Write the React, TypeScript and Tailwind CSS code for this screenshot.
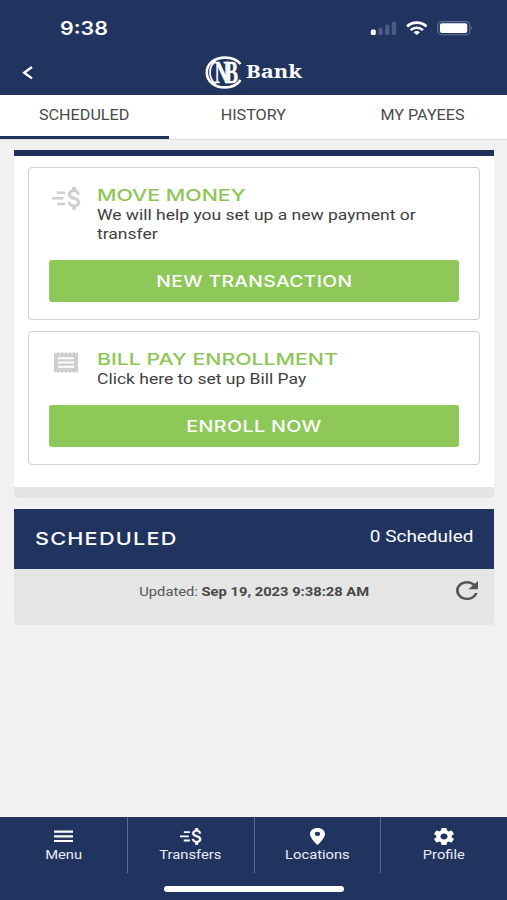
import React from 'react';

interface IconProps {
    className?: string;
}

const TransferIcon: React.FC<IconProps> = ({ className }) => (
    <svg viewBox="0 0 29 23" preserveAspectRatio="none" fill="currentColor" className={className}>
        <path d="M5 4.400h8v2.500H5zM0 10.100h11.500v2.500H0zM5 15.700h8v2.500H5z" />
        <path
            transform="translate(8.2 -3.75) scale(1.2 1.25)"
            stroke="currentColor"
            strokeWidth=".35"
            d="M11.8 10.9c-2.27-.59-3-1.2-3-2.15 0-1.09 1.01-1.85 2.7-1.85 1.78 0 2.44.85 2.5 2.1h2.21c-.07-1.72-1.12-3.3-3.21-3.81V3h-3v2.16c-1.94.42-3.5 1.68-3.5 3.61 0 2.31 1.91 3.46 4.7 4.13 2.5.6 3 1.48 3 2.41 0 .69-.49 1.79-2.7 1.79-2.06 0-2.87-.92-2.98-2.1h-2.2c.12 2.19 1.76 3.42 3.68 3.83V21h3v-2.15c1.95-.37 3.5-1.5 3.5-3.55 0-2.84-2.43-3.81-4.7-4.4z"
        />
    </svg>
);

const ReceiptIcon: React.FC<IconProps> = ({ className }) => (
    <svg viewBox="3 2 18 20" preserveAspectRatio="none" fill="currentColor" className={className}>
        <path d="M18 17H6v-2h12v2zm0-4H6v-2h12v2zm0-4H6V7h12v2zM3 22l1.5-1.5L6 22l1.5-1.5L9 22l1.5-1.5L12 22l1.5-1.5L15 22l1.5-1.5L18 22l1.5-1.5L21 22V2l-1.5 1.5L18 2l-1.5 1.5L15 2l-1.5 1.5L12 2l-1.5 1.5L9 2 7.5 3.5 6 2 4.5 3.5 3 2v20z" />
    </svg>
);

const RefreshIcon: React.FC<IconProps> = ({ className }) => (
    <svg viewBox="4 4 16 16" preserveAspectRatio="none" fill="currentColor" className={className}>
        <path d="M17.65 6.35C16.2 4.9 14.21 4 12 4c-4.42 0-7.99 3.58-7.99 8s3.57 8 7.99 8c3.73 0 6.84-2.55 7.73-6h-2.08c-.82 2.33-3.04 4-5.65 4-3.31 0-6-2.69-6-6s2.69-6 6-6c1.66 0 3.14.69 4.22 1.78L13 11h7V4l-2.35 2.35z" />
    </svg>
);

const MenuIcon: React.FC<IconProps> = ({ className }) => (
    <svg viewBox="0 0 19 17" preserveAspectRatio="none" fill="currentColor" className={className}>
        <path d="M0 2.500h19v2.200H0zM0 7.200h19v2.200H0zM0 11.900h19v2.200H0z" />
    </svg>
);

const PinIcon: React.FC<IconProps> = ({ className }) => (
    <svg viewBox="5 2 14 20" preserveAspectRatio="none" fill="currentColor" className={className}>
        <path d="M12 2C8.13 2 5 5.13 5 9c0 5.25 7 13 7 13s7-7.75 7-13c0-3.87-3.13-7-7-7zm0 9.5a2.5 2.5 0 0 1 0-5 2.5 2.5 0 0 1 0 5z" />
    </svg>
);

const GearIcon: React.FC<IconProps> = ({ className }) => (
    <svg viewBox="2.2 2 19.6 20" preserveAspectRatio="none" fill="currentColor" className={className}>
        <path d="M19.43 12.98c.04-.32.07-.64.07-.98s-.03-.66-.07-.98l2.11-1.65c.19-.15.24-.42.12-.64l-2-3.46c-.12-.22-.39-.3-.61-.22l-2.49 1c-.52-.4-1.08-.73-1.69-.98l-.38-2.65A.488.488 0 0 0 14 2h-4c-.25 0-.46.18-.49.42l-.38 2.65c-.61.25-1.17.59-1.69.98l-2.49-1c-.23-.09-.49 0-.61.22l-2 3.46c-.13.22-.07.49.12.64l2.11 1.65c-.04.32-.07.65-.07.98s.03.66.07.98l-2.11 1.65c-.19.15-.24.42-.12.64l2 3.46c.12.22.39.3.61.22l2.49-1c.52.4 1.08.73 1.69.98l.38 2.65c.03.24.24.42.49.42h4c.25 0 .46-.18.49-.42l.38-2.65c.61-.25 1.17-.59 1.69-.98l2.49 1c.23.09.49 0 .61-.22l2-3.46c.12-.22.07-.49-.12-.64l-2.11-1.65zM12 15.5c-1.93 0-3.5-1.57-3.5-3.5s1.57-3.5 3.5-3.5 3.5 1.57 3.5 3.5-1.57 3.5-3.5 3.5z" />
    </svg>
);

const StatusIcons: React.FC = () => (
    <svg width="102" height="16" viewBox="370 20 102 16" fill="none">
        <rect x="370.8" y="29.6" width="5" height="5.4" rx="1.5" fill="#fff" />
        <rect x="378.4" y="27.4" width="4.4" height="7.6" rx="1.5" fill="#4b5b82" />
        <rect x="385.1" y="24.6" width="4.4" height="10.4" rx="1.5" fill="#4b5b82" />
        <rect x="391.8" y="21.8" width="4.4" height="13.2" rx="1.5" fill="#4b5b82" />
        <path d="M407.1 26.400a14.200 14.200 0 0 1 19.400 0" stroke="#fff" strokeWidth="2.800" />
        <path d="M410.600 30.200a9.200 9.200 0 0 1 12.400 0" stroke="#fff" strokeWidth="2.500" />
        <path d="M416.800 35l-3.300-2.800a5.300 5.300 0 0 1 6.600 0z" fill="#fff" />
        <rect x="437.8" y="21.6" width="32" height="13.2" rx="3.8" stroke="#66739a" strokeWidth="1.1" />
        <rect x="439.9" y="23.3" width="27.4" height="9.8" rx="2" fill="#fff" />
        <path d="M470.9 26.3c1.2.5 1.2 3.3 0 3.8z" fill="#66739a" />
    </svg>
);

const BankLogo: React.FC = () => (
    <div className="flex items-center text-white">
        <svg width="38" height="34" viewBox="0 0 38 34" fill="none" className="overflow-visible">
            <path d="M35.500 8C32 3.600 27 1.600 20 1.600 9.200 1.600 1.800 8 1.800 16.500S9.200 31.400 20 31.400c7 0 12-2 15.500-7.400" stroke="#fff" strokeWidth="2.600" />
            <path d="M10.500 5C6.800 8 5 12.300 5 16.500s1.800 8.500 5.500 11.500" stroke="#fff" strokeWidth="1.800" />
            <text
                transform="translate(9.400 26.800) scale(.63 1)"
                fill="#fff"
                stroke="#fff"
                strokeWidth=".5"
                fontFamily="Liberation Serif, serif"
                fontWeight="700"
                fontSize="31"
                letterSpacing="-5.500"
            >
                NB
            </text>
        </svg>
        <span className="mb-[3px] ml-[3px] origin-left scale-x-[1.21] font-['Noto_Serif',serif] text-[18px] leading-none font-bold">Bank</span>
    </div>
);

const tabs = ['SCHEDULED', 'HISTORY', 'MY PAYEES'];

const navItems = [
    { label: 'Menu', icon: MenuIcon, size: 'w-[19px] h-[17px]' },
    { label: 'Transfers', icon: TransferIcon, size: 'w-[22px] h-[17px]' },
    { label: 'Locations', icon: PinIcon, size: 'w-[15px] h-[17px]' },
    { label: 'Profile', icon: GearIcon, size: 'w-[20px] h-[17px]' },
];

interface ActionCardProps {
    icon: React.ReactNode;
    title: string;
    titleClass: string;
    text: string;
    button: string;
    buttonClass: string;
}

const ActionCard: React.FC<ActionCardProps> = ({ icon, title, titleClass, text, button, buttonClass }) => (
    <div className="rounded-[4px] border-[1.5px] border-[#cfcfd1] px-5 pt-[19px] pb-[17px]">
        <div className="flex">
            <div className="w-[48px] shrink-0 text-[#cecece]">{icon}</div>
            <div className="flex-1">
                <h2 className={`-mt-[2px] mb-px origin-left font-[Inter,sans-serif] text-[16px] leading-[20px] font-medium whitespace-nowrap text-[#8dc657] ${titleClass}`}>{title}</h2>
                <p className="w-[290px] origin-left scale-x-[1.166] text-[15px] leading-[19px] text-[#404040]">{text}</p>
            </div>
        </div>
        <button className="mt-[16px] flex h-[42px] w-full items-center justify-center rounded-[3px] bg-[#8dc858] text-white">
            <span className={`font-[Inter,sans-serif] text-[16px] leading-none font-medium tracking-[0.3px] ${buttonClass}`}>{button}</span>
        </button>
    </div>
);

const App: React.FC = () => {
    return (
        <div className="flex h-[900px] w-[507px] flex-col overflow-hidden bg-[#f1f1f1] font-[Roboto,sans-serif]">
            <header className="h-[95px] bg-[#21345f]">
                <div className="flex h-[56px] items-start justify-between pt-5 pr-[35px] pl-[60px]">
                    <span className="origin-left scale-x-[1.19] font-[Inter,sans-serif] text-[18px] leading-[17px] font-semibold text-white">9:38</span>
                    <StatusIcons />
                </div>
                <div className="flex h-[33px] items-center pl-[22px]">
                    <svg width="12" height="14" viewBox="0 0 12 14" fill="none" className="mr-[171px]">
                        <path d="M10 1L2.200 6.700l7.800 5.700" stroke="#fff" strokeWidth="2.400" />
                    </svg>
                    <BankLogo />
                </div>
            </header>

            <nav className="flex h-[45px] border-b border-[#dedede] bg-white">
                {tabs.map((tab, index) => (
                    <div
                        key={tab}
                        className={`flex flex-1 items-center justify-center border-b-[3px] text-[14px] text-[#4a4a4a] ${index === 0 ? 'border-[#21305a]' : 'border-transparent'}`}
                    >
                        <span className="scale-x-[1.153]">{tab}</span>
                    </div>
                ))}
            </nav>

            <main className="flex-1 pt-[10px] pr-[13px] pl-[14px]">
                <section className="overflow-hidden rounded-b-[4px] border-t-6 border-b-[11px] border-t-[#21305a] border-b-[#e4e4e4] bg-white px-[14px] pt-[11px] pb-[22px]">
                    <div className="flex flex-col gap-[11px]">
                        <ActionCard
                            icon={<TransferIcon className="ml-[3px] h-[23px] w-[29px]" />}
                            title="MOVE MONEY"
                            titleClass="scale-x-[1.335]"
                            text="We will help you set up a new payment or transfer"
                            button="NEW TRANSACTION"
                            buttonClass="scale-x-[1.205]"
                        />
                        <ActionCard
                            icon={<ReceiptIcon className="mt-px ml-[5px] h-[21px] w-[24px]" />}
                            title="BILL PAY ENROLLMENT"
                            titleClass="scale-x-[1.33]"
                            text="Click here to set up Bill Pay"
                            button="ENROLL NOW"
                            buttonClass="scale-x-[1.23]"
                        />
                    </div>
                </section>

                <section className="mt-[11px] overflow-hidden rounded-b-[4px] bg-[#e5e5e5]">
                    <div className="flex h-[60px] items-center justify-between bg-[#21345f] px-[21px] text-white">
                        <h2 className="origin-left scale-x-[1.235] font-[Inter,sans-serif] text-[17.5px] font-medium tracking-[1px]">SCHEDULED</h2>
                        <span className="mb-[5px] origin-right scale-x-[1.185] text-[16px]">0 Scheduled</span>
                    </div>
                    <div className="flex h-[56px] items-start justify-end pt-[12px] pr-4 text-[#555]">
                        <p className="mt-[2px] mr-[87px] origin-right scale-x-[1.178] text-[12.5px] leading-[18px]">
                            Updated: <b className="text-[#484848]">Sep 19, 2023 9:38:28 AM</b>
                        </p>
                        <RefreshIcon className="h-[19px] w-[22px]" />
                    </div>
                </section>
            </main>

            <footer className="flex h-[83px] flex-col items-center bg-[#21345f]">
                <div className="flex h-[56px] w-full pl-px">
                    {navItems.map(({ label, icon: Icon, size }) => (
                        <div key={label} className="flex flex-1 flex-col items-center border-l border-[#5b6a8f] pt-[11px] text-white first:border-l-0">
                            <Icon className={size} />
                            <span className="mt-[3px] scale-x-[1.178] text-[12.5px] leading-[14px] text-[#e9edf6]">{label}</span>
                        </div>
                    ))}
                </div>
                <div className="mt-[13px] ml-px h-[6px] w-[180px] rounded-full bg-white" />
            </footer>
        </div>
    );
};

export default App;
